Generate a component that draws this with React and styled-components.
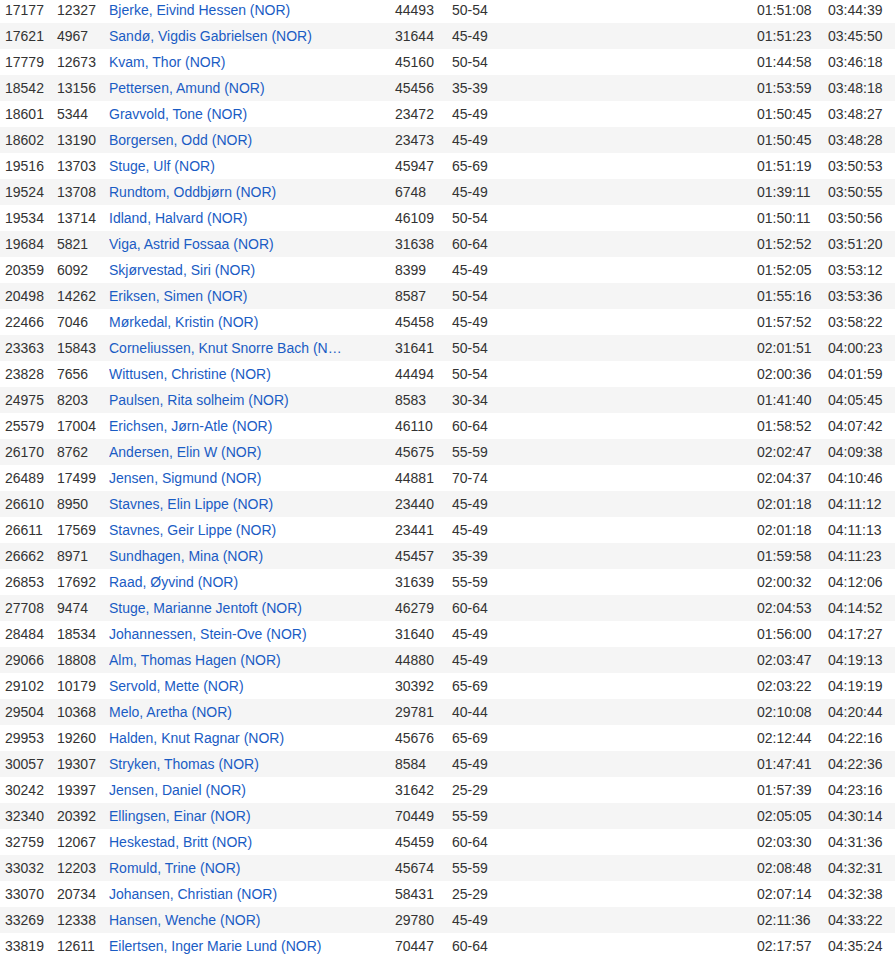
import React from 'react';
import styled, { createGlobalStyle } from 'styled-components';

const Global = createGlobalStyle`
  html, body {
    margin: 0;
    padding: 0;
    background: #fff;
    overflow: hidden;
  }
  body {
    font-family: "Liberation Sans", Arial, sans-serif;
    font-size: 14px;
    color: #333;
  }
`;

const Table = styled.table`
  width: 895px;
  margin-top: -3px;
  border-collapse: collapse;
  table-layout: fixed;
`;

const Row = styled.tr`
  height: 26px;
  background: ${(p) => (p.$odd ? '#f5f5f5' : '#fff')};
`;

const Cell = styled.td`
  padding: 0 0 0 5px;
  height: 26px;
  line-height: 20px;
  white-space: nowrap;
  overflow: hidden;
  vertical-align: middle;
`;

const NameLink = styled.a`
  display: block;
  max-width: 236px;
  color: #1a5cc4;
  text-decoration: none;
  overflow: hidden;
  text-overflow: ellipsis;
  white-space: nowrap;
`;

const cols = [52, 52, 286, 57, 305, 71, 72];

const rows = [
  ['17177', '12327', 'Bjerke, Eivind Hessen (NOR)', '44493', '50-54', '01:51:08', '03:44:39'],
  ['17621', '4967', 'Sandø, Vigdis Gabrielsen (NOR)', '31644', '45-49', '01:51:23', '03:45:50'],
  ['17779', '12673', 'Kvam, Thor (NOR)', '45160', '50-54', '01:44:58', '03:46:18'],
  ['18542', '13156', 'Pettersen, Amund (NOR)', '45456', '35-39', '01:53:59', '03:48:18'],
  ['18601', '5344', 'Gravvold, Tone (NOR)', '23472', '45-49', '01:50:45', '03:48:27'],
  ['18602', '13190', 'Borgersen, Odd (NOR)', '23473', '45-49', '01:50:45', '03:48:28'],
  ['19516', '13703', 'Stuge, Ulf (NOR)', '45947', '65-69', '01:51:19', '03:50:53'],
  ['19524', '13708', 'Rundtom, Oddbjørn (NOR)', '6748', '45-49', '01:39:11', '03:50:55'],
  ['19534', '13714', 'Idland, Halvard (NOR)', '46109', '50-54', '01:50:11', '03:50:56'],
  ['19684', '5821', 'Viga, Astrid Fossaa (NOR)', '31638', '60-64', '01:52:52', '03:51:20'],
  ['20359', '6092', 'Skjørvestad, Siri (NOR)', '8399', '45-49', '01:52:05', '03:53:12'],
  ['20498', '14262', 'Eriksen, Simen (NOR)', '8587', '50-54', '01:55:16', '03:53:36'],
  ['22466', '7046', 'Mørkedal, Kristin (NOR)', '45458', '45-49', '01:57:52', '03:58:22'],
  ['23363', '15843', 'Corneliussen, Knut Snorre Bach (NOR)', '31641', '50-54', '02:01:51', '04:00:23'],
  ['23828', '7656', 'Wittusen, Christine (NOR)', '44494', '50-54', '02:00:36', '04:01:59'],
  ['24975', '8203', 'Paulsen, Rita solheim (NOR)', '8583', '30-34', '01:41:40', '04:05:45'],
  ['25579', '17004', 'Erichsen, Jørn-Atle (NOR)', '46110', '60-64', '01:58:52', '04:07:42'],
  ['26170', '8762', 'Andersen, Elin W (NOR)', '45675', '55-59', '02:02:47', '04:09:38'],
  ['26489', '17499', 'Jensen, Sigmund (NOR)', '44881', '70-74', '02:04:37', '04:10:46'],
  ['26610', '8950', 'Stavnes, Elin Lippe (NOR)', '23440', '45-49', '02:01:18', '04:11:12'],
  ['26611', '17569', 'Stavnes, Geir Lippe (NOR)', '23441', '45-49', '02:01:18', '04:11:13'],
  ['26662', '8971', 'Sundhagen, Mina (NOR)', '45457', '35-39', '01:59:58', '04:11:23'],
  ['26853', '17692', 'Raad, Øyvind (NOR)', '31639', '55-59', '02:00:32', '04:12:06'],
  ['27708', '9474', 'Stuge, Marianne Jentoft (NOR)', '46279', '60-64', '02:04:53', '04:14:52'],
  ['28484', '18534', 'Johannessen, Stein-Ove (NOR)', '31640', '45-49', '01:56:00', '04:17:27'],
  ['29066', '18808', 'Alm, Thomas Hagen (NOR)', '44880', '45-49', '02:03:47', '04:19:13'],
  ['29102', '10179', 'Servold, Mette (NOR)', '30392', '65-69', '02:03:22', '04:19:19'],
  ['29504', '10368', 'Melo, Aretha (NOR)', '29781', '40-44', '02:10:08', '04:20:44'],
  ['29953', '19260', 'Halden, Knut Ragnar (NOR)', '45676', '65-69', '02:12:44', '04:22:16'],
  ['30057', '19307', 'Stryken, Thomas (NOR)', '8584', '45-49', '01:47:41', '04:22:36'],
  ['30242', '19397', 'Jensen, Daniel (NOR)', '31642', '25-29', '01:57:39', '04:23:16'],
  ['32340', '20392', 'Ellingsen, Einar (NOR)', '70449', '55-59', '02:05:05', '04:30:14'],
  ['32759', '12067', 'Heskestad, Britt (NOR)', '45459', '60-64', '02:03:30', '04:31:36'],
  ['33032', '12203', 'Romuld, Trine (NOR)', '45674', '55-59', '02:08:48', '04:32:31'],
  ['33070', '20734', 'Johansen, Christian (NOR)', '58431', '25-29', '02:07:14', '04:32:38'],
  ['33269', '12338', 'Hansen, Wenche (NOR)', '29780', '45-49', '02:11:36', '04:33:22'],
  ['33819', '12611', 'Eilertsen, Inger Marie Lund (NOR)', '70447', '60-64', '02:17:57', '04:35:24'],
];

export default function App() {
  return (
    <>
      <Global />
      <Table>
        <colgroup>
          {cols.map((w, i) => (
            <col key={i} style={{ width: w }} />
          ))}
        </colgroup>
        <tbody>
          {rows.map((r, i) => (
            <Row key={r[0]} $odd={i % 2 === 1}>
              <Cell>{r[0]}</Cell>
              <Cell>{r[1]}</Cell>
              <Cell>
                <NameLink href="#">{r[2]}</NameLink>
              </Cell>
              <Cell>{r[3]}</Cell>
              <Cell>{r[4]}</Cell>
              <Cell>{r[5]}</Cell>
              <Cell>{r[6]}</Cell>
            </Row>
          ))}
        </tbody>
      </Table>
    </>
  );
}
